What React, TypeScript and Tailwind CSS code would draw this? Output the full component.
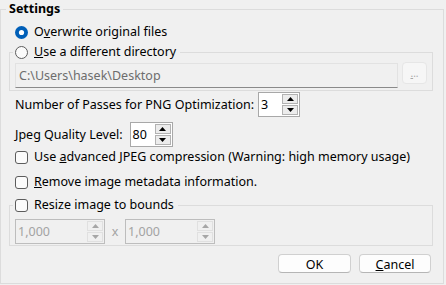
import React from "react";

function Arrow({ up, color }: { up?: boolean; color: string }) {
  return (
    <svg width="7" height="4" viewBox="0 0 7 4">
      {up ? <polygon points="0,4 7,4 3.5,0" fill={color} /> : <polygon points="0,0 7,0 3.5,4" fill={color} />}
    </svg>
  );
}

function Spin({ value, width, disabled }: { value: string; width: string; disabled?: boolean }) {
  const arrow = disabled ? "#a6a6a6" : "#000000";
  return (
    <div
      className={`${width} h-[25px] flex items-stretch border ${
        disabled ? "border-[#bdbdbd] bg-[#f0f0f0] text-[#a3a3a3]" : "border-[#a8a8a8] bg-white text-black"
      }`}
    >
      <div className="flex-1 flex items-center pl-[2px]">{value}</div>
      <div className="flex flex-col gap-[1px] py-[1px] pr-[1px]">
        <div
          className={`w-[16px] flex-1 flex items-center justify-center border ${
            disabled ? "border-[#e0e0e0] bg-[#f0f0f0]" : "border-[#b2b2b2] bg-[#ececec]"
          }`}
        >
          <Arrow up color={arrow} />
        </div>
        <div
          className={`w-[16px] flex-1 flex items-center justify-center border ${
            disabled ? "border-[#e0e0e0] bg-[#f0f0f0]" : "border-[#b2b2b2] bg-[#ececec]"
          }`}
        >
          <Arrow color={arrow} />
        </div>
      </div>
    </div>
  );
}

function Radio({ checked }: { checked?: boolean }) {
  return (
    <svg width="13" height="13" viewBox="0 0 13 13" className="shrink-0">
      {checked ? (
        <>
          <circle cx="6.5" cy="6.5" r="6.5" fill="#005fb8" />
          <circle cx="6.5" cy="6.5" r="2.6" fill="#ffffff" />
        </>
      ) : (
        <circle cx="6.5" cy="6.5" r="6" fill="#fbfbfb" stroke="#5c5c5c" strokeWidth="1" />
      )}
    </svg>
  );
}

function Check() {
  return <span className="shrink-0 w-[13px] h-[13px] rounded-[3px] border border-[#5c5c5c] bg-[#fbfbfb]" />;
}

export default function App() {
  return (
    <div className="w-[446px] h-[285px] bg-[#f0f0f0] overflow-hidden text-[12.5px] leading-[16px] text-black font-['Noto_Sans',sans-serif]">
      <fieldset className="w-[444px] h-[284px] border border-[#dcdcdc] pl-[8px] pr-[10px]">
        <legend className="-ml-[3px] px-[3px] font-bold leading-[18px]">Settings</legend>

        {/* radio rows */}
        <div className="mt-[4px] h-[20px] pl-[6px] flex items-center gap-[6px]">
          <Radio checked />
          <span>
            O<u>v</u>erwrite original files
          </span>
        </div>

        <fieldset className="border border-[#dcdcdc] pl-[5px] pr-[5px] pb-[2px]">
          <legend className="-ml-[2px] pl-[2px] pr-[4px] h-[20px] flex items-center gap-[6px]">
            <Radio />
            <span>
              <u>U</u>se a different directory
            </span>
          </legend>
          <div className="flex items-start gap-[4px]">
            <div className="mt-[1px] flex-1 h-[25px] flex items-center pl-[3px] bg-[#f0f0f0] border border-[#e2e2e2] border-b-[#8a8a8a] text-[#6d6d6d]">
              C:\Users\hasek\Desktop
            </div>
            <div className="w-[25px] h-[22px] rounded-[4px] border border-[#e6e6e6] bg-[#f6f6f6] flex items-center justify-center text-[#a8a8a8] text-[10px]">
              <span>
                <u>.</u>..
              </span>
            </div>
          </div>
        </fieldset>

        <div className="mt-[1px] pl-[6px] flex items-center gap-[4px]">
          <span>Number of Passes for PNG Optimization:</span>
          <Spin value="3" width="w-[42px]" />
        </div>

        <div className="mt-[5px] pl-[6px] flex items-center gap-[7px]">
          <span>Jpeg Quality Level:</span>
          <Spin value="80" width="w-[43px]" />
        </div>

        <div className="h-[20px] pl-[6px] flex items-center gap-[6px]">
          <Check />
          <span>
            Use <u>a</u>dvanced JPEG compression (Warning: high memory usage)
          </span>
        </div>

        <div className="mt-[5px] h-[20px] pl-[6px] flex items-center gap-[6px]">
          <Check />
          <span>
            <u>R</u>emove image metadata information.
          </span>
        </div>

        <fieldset className="mt-[3px] border border-[#dcdcdc] pl-[5px] pr-[5px] pt-[4px] pb-[1px]">
          <legend className="-ml-[2px] pl-[2px] pr-[4px] h-[20px] flex items-center gap-[6px]">
            <Check />
            <span>Resize image to bounds</span>
          </legend>
          <div className="flex items-center">
            <Spin value="1,000" width="w-[90px]" disabled />
            <span className="w-[20px] text-center text-[#a3a3a3]">x</span>
            <Spin value="1,000" width="w-[90px]" disabled />
          </div>
        </fieldset>

        <div className="mt-[8px] pr-[2px] flex justify-end gap-[8px]">
          <button className="w-[73px] h-[19px] rounded-[4px] border border-[#d0d0d0] border-b-[#b5b5b5] bg-[#fdfdfd] flex items-center justify-center pt-[2px]">
            OK
          </button>
          <button className="w-[72px] h-[19px] rounded-[4px] border border-[#d0d0d0] border-b-[#b5b5b5] bg-[#fdfdfd] flex items-center justify-center pt-[2px]">
            <span>
              <u>C</u>ancel
            </span>
          </button>
        </div>
      </fieldset>
    </div>
  );
}
